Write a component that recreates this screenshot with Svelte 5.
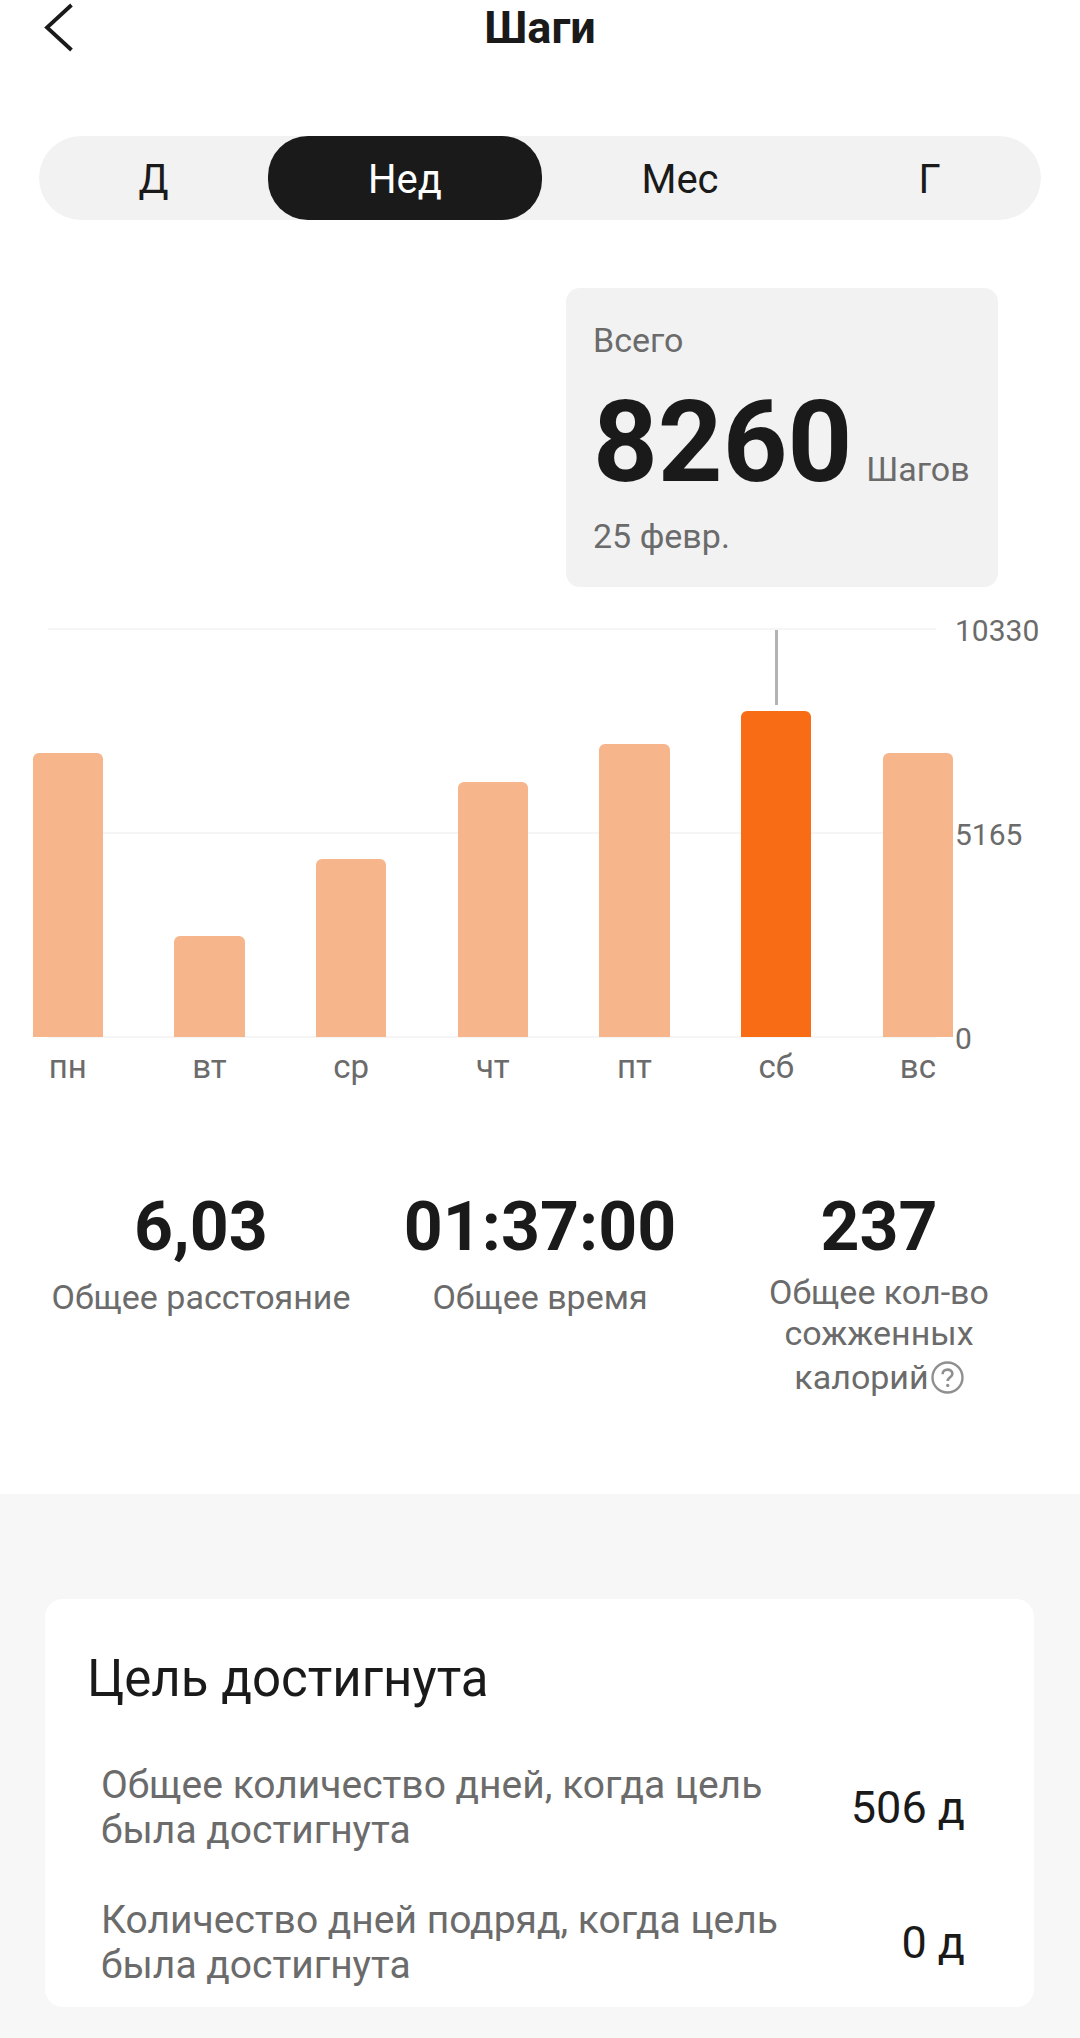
<script lang="ts">
  const tabs = [
    { label: 'Д', active: false },
    { label: 'Нед', active: true },
    { label: 'Мес', active: false },
    { label: 'Г', active: false }
  ];

  const days = [
    { label: 'пн', top: 753 },
    { label: 'вт', top: 936 },
    { label: 'ср', top: 859 },
    { label: 'чт', top: 782 },
    { label: 'пт', top: 744 },
    { label: 'сб', top: 711, active: true },
    { label: 'вс', top: 753 }
  ];

  const baseline = 1037;
</script>

<div class="page">
  <header class="topbar">
    <svg class="back" width="30" height="50" viewBox="0 0 30 50" fill="none" aria-hidden="true">
      <path d="M27.5 3 L3 25.5 L27.5 48" stroke="#1a1a1a" stroke-width="3.8" />
    </svg>
    <h1>Шаги</h1>
  </header>

  <nav class="tabs">
    {#each tabs as tab}
      <div class="tab" class:active={tab.active}>{tab.label}</div>
    {/each}
  </nav>

  <section class="chart">
    <div class="tip-row">
      <div class="tip">
        <p class="tip-label">Всего</p>
        <p class="tip-value"><strong>8260</strong><span>Шагов</span></p>
        <p class="tip-label date">25 февр.</p>
      </div>
    </div>

    <div class="plot">
      <i class="grid top"></i>
      <i class="grid mid"></i>
      <i class="grid base"></i>
      <i class="marker"></i>
      <span class="tick t1">10330</span>
      <span class="tick t2">5165</span>
      <span class="tick t3">0</span>
      <div class="bars">
        {#each days as day}
          <div class="bar" class:active={day.active} style="height: {baseline - day.top}px"></div>
        {/each}
      </div>
    </div>

    <div class="labels">
      {#each days as day}
        <span>{day.label}</span>
      {/each}
    </div>
  </section>

  <section class="stats">
    <div class="stat">
      <b>6,03</b>
      <p>Общее расстояние</p>
    </div>
    <div class="stat">
      <b>01:37:00</b>
      <p>Общее время</p>
    </div>
    <div class="stat">
      <b>237</b>
      <p class="wrap">Общее кол-во<br />сожженных<span class="last">калорий<svg class="help" width="33" height="33" viewBox="0 0 33 33" fill="none" aria-hidden="true">
          <circle cx="16.5" cy="16.5" r="15" stroke="#8f8f8f" stroke-width="2.4" />
          <path d="M11.6 13.2c0-2.9 2.1-4.6 4.9-4.6s4.9 1.7 4.9 4.2c0 3.4-4.7 3.6-4.7 7.2" stroke="#8f8f8f" stroke-width="2.6" />
          <circle cx="16.7" cy="24.4" r="1.7" fill="#8f8f8f" />
        </svg></span></p>
    </div>
  </section>

  <section class="lower">
    <div class="card">
      <h2>Цель достигнута</h2>
      <div class="row">
        <p>Общее количество дней, когда цель<br />была достигнута</p>
        <span>506 д</span>
      </div>
      <div class="row">
        <p>Количество дней подряд, когда цель<br />была достигнута</p>
        <span>0 д</span>
      </div>
    </div>
  </section>
</div>

<style>
  :global(body) {
    background: #fff;
  }

  p,
  h1,
  h2 {
    margin: 0;
    font-weight: 400;
  }

  .page {
    width: 1080px;
    height: 2038px;
    overflow: hidden;
    font-family: Roboto, 'Noto Sans', sans-serif;
    color: #1a1a1a;
    background: #fff;
  }

  .topbar {
    position: relative;
    height: 56px;
    display: flex;
    justify-content: center;
    align-items: center;
  }

  .back {
    position: absolute;
    left: 44px;
    top: 2px;
  }

  h1 {
    font-size: 45px;
    font-weight: 700;
    line-height: 56px;
  }

  .tabs {
    margin: 80px 39px 0 39px;
    height: 84px;
    border-radius: 42px;
    background: #f2f2f2;
    display: grid;
    grid-template-columns: 229px 274px 276px 223px;
  }

  .tab {
    display: flex;
    align-items: center;
    justify-content: center;
    padding-top: 3px;
    font-size: 40px;
    border-radius: 40px;
  }

  .tab.active {
    background: #1a1a1a;
    color: #fff;
  }

  .tip-row {
    margin-top: 68px;
    padding-left: 566px;
  }

  .tip {
    width: 432px;
    height: 299px;
    box-sizing: border-box;
    padding: 30px 0 0 27px;
    background: #f2f2f2;
    border-radius: 14px;
  }

  .tip-label {
    font-size: 34px;
    line-height: 44px;
    color: #6b6b6b;
  }

  .tip-value {
    display: flex;
    align-items: baseline;
    gap: 14px;
    margin-top: 16px;
    height: 130px;
    line-height: 130px;
  }

  .tip-value strong {
    font-size: 113px;
    font-weight: 700;
  }

  .tip-value span {
    font-size: 34px;
    color: #6b6b6b;
  }

  .date {
    margin-top: 6px;
  }

  .plot {
    position: relative;
    margin-top: 42px;
    height: 408px;
  }

  .grid {
    position: absolute;
    left: 48px;
    width: 888px;
    height: 2px;
    background: #f5f5f5;
  }

  .grid.top {
    top: -1px;
  }

  .grid.mid {
    top: 203px;
  }

  .grid.base {
    top: 407px;
  }

  .marker {
    position: absolute;
    left: 775px;
    top: 1px;
    width: 3px;
    height: 75px;
    background: #b3b3b3;
  }

  .tick {
    position: absolute;
    left: 955px;
    font-size: 30px;
    line-height: 36px;
    color: #6b6b6b;
  }

  .t1 {
    top: -16px;
  }

  .t2 {
    top: 188px;
  }

  .t3 {
    top: 392px;
  }

  .bars,
  .labels {
    display: grid;
    grid-template-columns: repeat(7, 70.5px);
    column-gap: 71.2px;
    padding-left: 32.5px;
  }

  .bars {
    position: relative;
    height: 408px;
    align-items: end;
  }

  .bar {
    background: #f7b58c;
    border-radius: 6px 6px 0 0;
  }

  .bar.active {
    background: #f96c16;
  }

  .labels {
    margin-top: 10px;
    font-size: 33px;
    line-height: 40px;
    color: #6b6b6b;
    text-align: center;
  }

  .stats {
    margin-top: 102px;
    height: 305px;
    display: grid;
    grid-template-columns: 402px 276px 402px;
  }

  .stat {
    text-align: center;
  }

  .stat b {
    display: block;
    font-size: 68px;
    line-height: 76px;
    font-weight: 700;
    white-space: nowrap;
  }

  .stat p {
    margin-top: 10px;
    font-size: 34px;
    line-height: 44px;
    color: #6b6b6b;
  }

  .stat p.wrap {
    margin-top: 7px;
    line-height: 41px;
  }

  .last {
    display: block;
    margin-top: 3px;
  }

  .help {
    margin-left: 2px;
    vertical-align: -5px;
  }

  .lower {
    height: 544px;
    padding: 105px 46px 0 45px;
    box-sizing: border-box;
    background: #f7f7f7;
  }

  .card {
    height: 408px;
    box-sizing: border-box;
    padding: 52px 69px 0 42px;
    background: #fff;
    border-radius: 18px;
  }

  h2 {
    font-size: 51px;
    line-height: 56px;
    margin-bottom: 56px;
  }

  .row {
    height: 135px;
    padding-left: 14px;
    display: flex;
    justify-content: space-between;
    align-items: flex-start;
  }

  .row p {
    font-size: 39px;
    line-height: 45px;
    color: #6b6b6b;
  }

  .row span {
    font-size: 45px;
    line-height: 90px;
    white-space: nowrap;
  }
</style>
